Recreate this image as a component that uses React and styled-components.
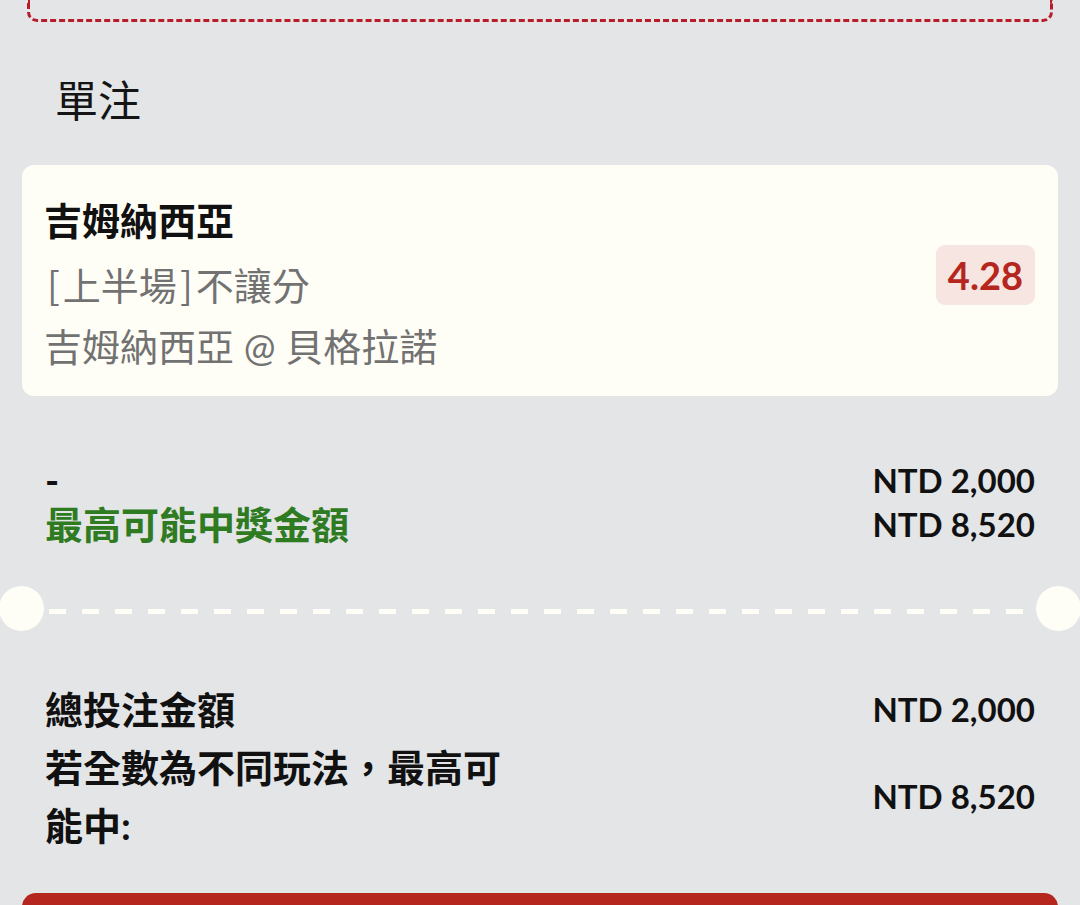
import React from "react";
import styled, { createGlobalStyle } from "styled-components";

const Global = createGlobalStyle`
  html, body { margin: 0; padding: 0; background: #e4e5e7; }
  body {
    font-family: Lato, "Noto Sans CJK TC", sans-serif;
    color: #111;
    width: 1080px;
    height: 905px;
    overflow: hidden;
  }
`;

const Page = styled.div`
  display: flex;
  flex-direction: column;
  width: 1080px;
`;

const DashedBox = styled.div`
  height: 19px;
  margin: 0 27px;
  border: 3px dashed #b81c2b;
  border-top: none;
  border-radius: 0 0 10px 10px;
`;

const Heading = styled.h2`
  margin: 49px 0 0 55px;
  font-size: 43px;
  line-height: 60px;
  font-weight: 400;
  color: #151515;
`;

const Card = styled.div`
  margin: 34px 22px 0;
  padding: 24px 23px 18px 22px;
  background: #fffef6;
  border-radius: 12px;
  display: flex;
  align-items: center;
  justify-content: space-between;
`;

const CardText = styled.div`
  display: flex;
  flex-direction: column;
`;

const Line = styled.div`
  font-family: ${(p) =>
    p.$cjk ? '"Noto Sans CJK TC", sans-serif' : 'Lato, "Noto Sans CJK TC", sans-serif'};
  font-size: 38px;
  line-height: 63px;
  font-weight: ${(p) => (p.$bold ? 700 : 400)};
  color: ${(p) => (p.$bold ? "#111" : "#727272")};
  white-space: nowrap;
`;

const Bracket = styled.span`
  padding: 0 3px;
`;

const Odds = styled.div`
  background: #f6e5e0;
  color: #b5261e;
  border-radius: 9px;
  font-size: 38px;
  font-weight: 700;
  line-height: 60px;
  padding: 0 12px;
  margin-top: -17px;
`;

const Summary = styled.div`
  margin: ${(p) => p.$mt}px 45px 0 45px;
  display: grid;
  grid-template-columns: 1fr auto;
  align-items: center;
`;

const Label = styled.div`
  font-size: 38px;
  line-height: ${(p) => p.$lh}px;
  font-weight: 700;
  color: ${(p) => (p.$green ? "#2f7b22" : "#111")};
  max-width: 480px;
  grid-row: ${(p) => p.$row || "auto"};
`;

const Amount = styled.div`
  font-size: 33px;
  line-height: ${(p) => p.$lh}px;
  font-weight: 700;
  color: #111;
  text-align: right;
  grid-column: 2;
  grid-row: ${(p) => p.$row || "auto"};
`;

const Separator = styled.div`
  margin-top: 40px;
  display: flex;
  align-items: center;
  height: 45px;
`;

const Hole = styled.div`
  width: 45px;
  height: 45px;
  border-radius: 50%;
  background: #fffef6;
  flex: none;
  margin: ${(p) => (p.$left ? "0 0 0 -1px" : "0 -1px 0 0")};
`;

const DashLine = styled.div`
  flex: 1;
  height: 5px;
  margin: 5px 3px 0 5px;
  background: repeating-linear-gradient(
    to right,
    #fffef6 0 17px,
    transparent 17px 33px
  );
`;

const Button = styled.div`
  margin: 39px 22px 0;
  height: 60px;
  background: #b5261e;
  border-radius: 14px;
`;

export default function App() {
  return (
    <>
      <Global />
      <Page>
        <DashedBox />
        <Heading>單注</Heading>
        <Card>
          <CardText>
            <Line $bold>吉姆納西亞</Line>
            <Line $cjk>
              <Bracket>[</Bracket>上半場<Bracket>]</Bracket>不讓分
            </Line>
            <Line>吉姆納西亞 @ 貝格拉諾</Line>
          </CardText>
          <Odds>4.28</Odds>
        </Card>
        <Summary $mt={62}>
          <Label $lh={44}>-</Label>
          <Amount $lh={44}>NTD 2,000</Amount>
          <Label $lh={44} $green>最高可能中獎金額</Label>
          <Amount $lh={44}>NTD 8,520</Amount>
        </Summary>
        <Separator>
          <Hole $left />
          <DashLine />
          <Hole />
        </Separator>
        <Summary $mt={49}>
          <Label $lh={58} $row="1">總投注金額</Label>
          <Amount $lh={58} $row="1">NTD 2,000</Amount>
          <Label $lh={58} $row="2">若全數為不同玩法，最高可能中:</Label>
          <Amount $lh={58} $row="2">NTD 8,520</Amount>
        </Summary>
        <Button />
      </Page>
    </>
  );
}
